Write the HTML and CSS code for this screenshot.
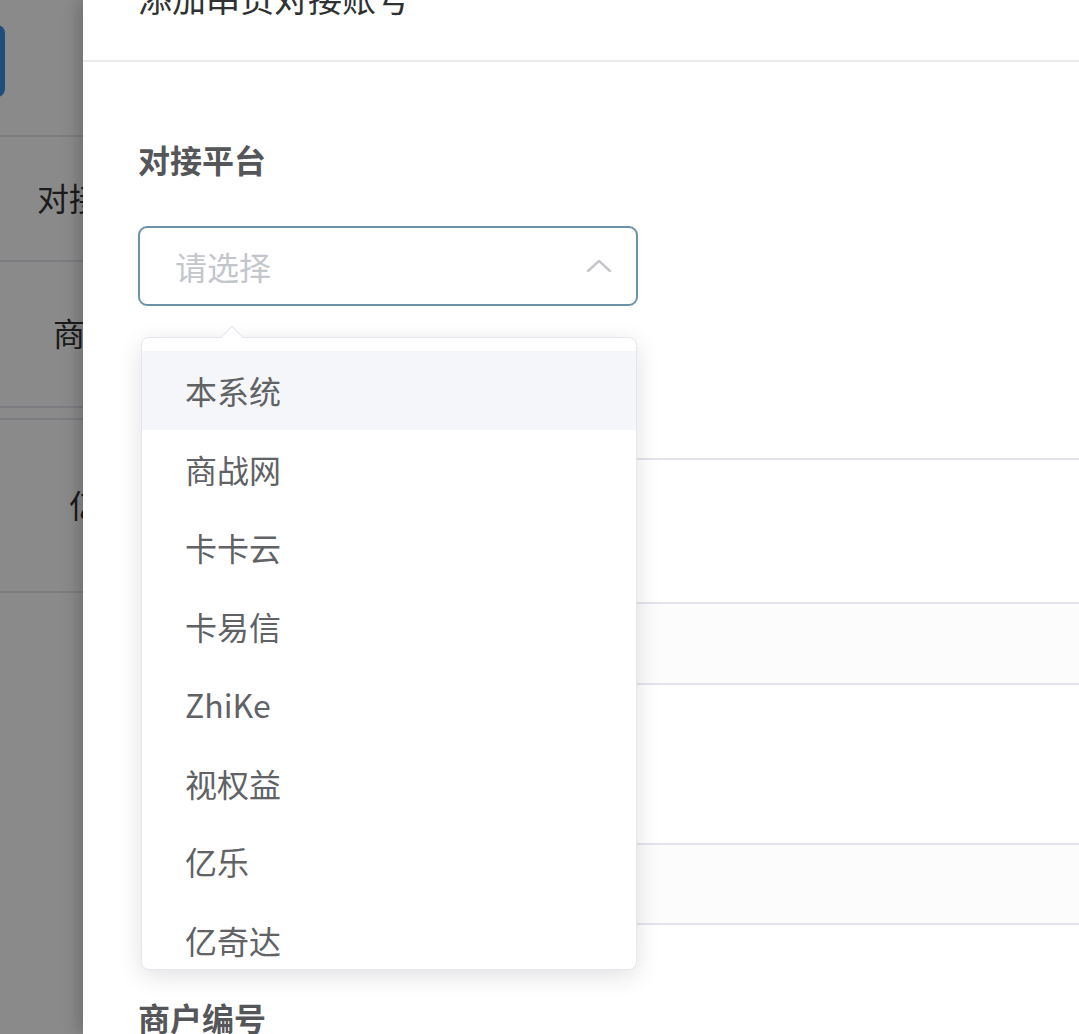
FILE: index.html
```html
<!DOCTYPE html>
<html lang="zh-CN">
<head>
<meta charset="utf-8">
<title>添加串货对接账号</title>
<link rel="stylesheet" href="styles.css">
</head>
<body>
  <div class="app">
    <div class="toolbar">
      <span class="primary-btn" aria-label="新增"></span>
    </div>
    <div class="table">
      <div class="row row-1"><div class="cell">对接平台</div></div>
      <div class="row row-2"><div class="cell">商战网</div></div>
      <div class="row row-gap"></div>
      <div class="row row-3"><div class="cell">亿乐</div></div>
    </div>
  </div>

  <div class="mask"></div>

  <aside class="drawer">
    <header class="drawer-header">
      <h2 class="drawer-title">添加串货对接账号</h2>
    </header>
    <div class="drawer-body">
      <div class="form-item select-item">
        <label class="form-label">对接平台</label>
        <div class="select is-focus">
          <span class="select-placeholder">请选择</span>
          <svg class="select-arrow" width="26" height="15" viewBox="0 0 26 15" aria-hidden="true">
            <polyline points="2,13 13,3 24,13" fill="none" stroke="#c4c6cc" stroke-width="2.4" stroke-linecap="round" stroke-linejoin="round"/>
          </svg>
        </div>

        <div class="dropdown">
          <span class="dropdown-arrow"></span>
          <div class="dropdown-wrap">
            <ul class="dropdown-list">
              <li class="dropdown-item is-hover">本系统</li>
              <li class="dropdown-item">商战网</li>
              <li class="dropdown-item">卡卡云</li>
              <li class="dropdown-item">卡易信</li>
              <li class="dropdown-item">ZhiKe</li>
              <li class="dropdown-item">视权益</li>
              <li class="dropdown-item">亿乐</li>
              <li class="dropdown-item">亿奇达</li>
            </ul>
          </div>
        </div>
      </div>

      <div class="field-stack">
        <div class="field field-tall"></div>
        <div class="field field-short"></div>
        <div class="field field-lower"></div>
      </div>

      <div class="form-item">
        <label class="form-label">商户编号</label>
      </div>
    </div>
  </aside>
</body>
</html>
```
FILE: styles.css
```css
* { box-sizing: border-box; }

html, body {
  margin: 0;
  padding: 0;
  width: 1079px;
  height: 1034px;
  overflow: hidden;
  background: #ffffff;
  font-family: "Noto Sans CJK SC", "Noto Sans", "Liberation Sans", sans-serif;
}

/* ---------- background app ---------- */
.app {
  width: 1079px;
  height: 1034px;
  background: #ffffff;
}

.toolbar {
  padding-top: 25px;
  height: 135px;
}

.primary-btn {
  display: block;
  margin-left: -70px;
  width: 75px;
  height: 72px;
  border-radius: 8px;
  background: #3a8ee6;
}

.table {
  border-top: 2px solid #e6e8ee;
}

.row {
  border-bottom: 2px solid #e6e8ee;
  display: flex;
  align-items: center;
}

.row-1 { height: 125px; }
.row-2 { height: 146px; }
.row-gap { height: 12px; }
.row-3 { height: 173px; }

.cell {
  width: 192px;
  margin-left: 5px;
  margin-top: -4px;
  text-align: center;
  font-size: 32px;
  color: #333333;
  white-space: nowrap;
}

.mask {
  position: absolute;
  inset: 0;
  background: rgba(0, 0, 0, 0.46);
}

/* ---------- drawer ---------- */
.drawer {
  position: absolute;
  top: 0;
  left: 83px;
  width: 1100px;
  height: 1034px;
  background: #ffffff;
  box-shadow: -6px 0 14px rgba(0, 0, 0, 0.18);
  overflow: hidden;
}

.drawer-header {
  margin-top: -30px;
  height: 92px;
  padding: 8px 55px 0;
  border-bottom: 2px solid #ebebee;
}

.drawer-title {
  margin: 0;
  font-size: 34px;
  line-height: 40px;
  font-weight: 400;
  color: #303133;
}

.drawer-body {
  padding: 0 55px;
}

.form-item {
  position: relative;
}

.form-label {
  display: block;
  font-size: 32px;
  line-height: 44px;
  font-weight: 700;
  color: #555659;
}

.select-item .form-label {
  margin-top: 75px;
}

.select {
  margin-top: 45px;
  width: 500px;
  height: 80px;
  border: 2px solid #6a93a8;
  border-radius: 9px;
  display: flex;
  align-items: center;
  justify-content: space-between;
  padding: 0 24px 0 35px;
  background: #ffffff;
}

.select-placeholder {
  font-size: 32px;
  color: #c3c6cc;
}

.select-arrow {
  display: block;
  margin-top: -2px;
}

/* dropdown popper (overlays the form) */
.dropdown {
  position: absolute;
  top: 200px;
  left: 3px;
  width: 496px;
  height: 633px;
  background: #ffffff;
  border: 1px solid #e4e7ed;
  border-radius: 8px;
  box-shadow: 0 6px 24px rgba(0, 0, 0, 0.12);
  z-index: 2;
}

.dropdown-arrow {
  position: absolute;
  top: -9px;
  left: 82px;
  width: 16px;
  height: 16px;
  background: #ffffff;
  border-top: 1px solid #e4e7ed;
  border-left: 1px solid #e4e7ed;
  transform: rotate(45deg);
}

.dropdown-wrap {
  position: relative;
  height: 631px;
  overflow: hidden;
  border-radius: 8px;
}

.dropdown-list {
  list-style: none;
  margin: 0;
  padding: 13px 0 0;
}

.dropdown-item {
  height: 78.5px;
  line-height: 78.5px;
  padding: 0 43px;
  font-size: 32px;
  color: #606266;
  white-space: nowrap;
}

.dropdown-item.is-hover {
  background: #f5f6f9;
}

/* fields underneath the dropdown */
.field-stack {
  margin-top: 152px;
  margin-left: 40px;
  width: 1000px;
}

.field {
  border-bottom: 2px solid #e2e4e9;
}

.field-tall {
  height: 146px;
  border-top: 2px solid #e2e4e9;
}

.field-short {
  height: 81px;
  background: #fcfcfd;
}

.field-lower {
  margin-top: 158px;
  height: 82px;
  border-top: 2px solid #e2e4e9;
  background: #fcfcfd;
}

.field-stack + .form-item .form-label {
  margin-top: 70px;
}
```
